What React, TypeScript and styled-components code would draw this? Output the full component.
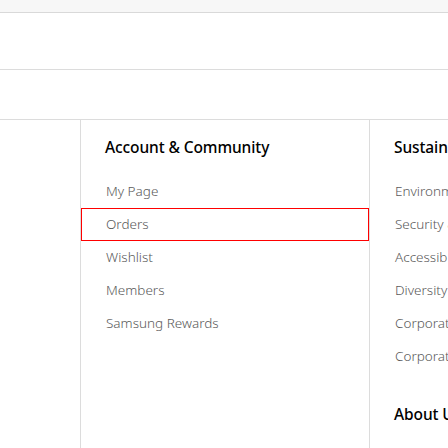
import React from "react";
import styled, { createGlobalStyle } from "styled-components";

const Global = createGlobalStyle`
  html, body { margin: 0; padding: 0; background: #fff; }
  body { font-family: "Noto Sans", "Open Sans", Arial, sans-serif; overflow: hidden; }
`;

const Page = styled.div`
  width: 448px;
  height: 448px;
  overflow: hidden;
  display: flex;
  flex-direction: column;
`;

const TopStrip = styled.div`
  height: 12px;
  background: #f7f7f7;
  border-bottom: 1px solid #d9d9d9;
  flex: none;
`;

const Band = styled.div<{ $h: number }>`
  height: ${(p) => p.$h}px;
  border-bottom: 1px solid #dcdcdc;
  flex: none;
`;

const Columns = styled.div`
  display: flex;
  flex: 1;
  min-height: 0;
`;

const Column = styled.div<{ $w: number }>`
  width: ${(p) => p.$w}px;
  flex: none;
  border-right: 1px solid #dcdcdc;
  display: flex;
  flex-direction: column;
`;

const Heading = styled.h3<{ $top: number }>`
  margin: ${(p) => p.$top}px 0 0;
  padding: 0 24px;
  font-size: 15.5px;
  line-height: 20px;
  font-weight: 500;
  color: #000;
  white-space: nowrap;
  overflow: hidden;
  letter-spacing: -0.1px;
`;

const List = styled.ul`
  list-style: none;
  margin: 18px 0 0;
  padding: 0;
`;

const Item = styled.li``;

const Link = styled.a<{ $focus?: boolean }>`
  display: block;
  height: 33px;
  line-height: 33px;
  padding: 0 25px;
  font-size: 13.5px;
  font-weight: 300;
  color: #5a5a5a;
  text-decoration: none;
  white-space: nowrap;
  overflow: hidden;
  outline: ${(p) => (p.$focus ? "1px solid #ff0000" : "none")};
  outline-offset: -1px;
`;

const account = ["My Page", "Orders", "Wishlist", "Members", "Samsung Rewards"];
const sustain = [
  "Environment",
  "Security & Privacy",
  "Accessibility",
  "Diversity · Equity · Inclusion",
  "Corporate Citizenship",
  "Corporate Sustainability",
];

export default function App() {
  return (
    <Page>
      <Global />
      <TopStrip />
      <Band $h={56} />
      <Band $h={49} />
      <Columns>
        <Column $w={80} />
        <Column $w={288}>
          <Heading $top={17}>Account &amp; Community</Heading>
          <List>
            {account.map((t) => (
              <Item key={t}>
                <Link href="#" $focus={t === "Orders"}>
                  {t}
                </Link>
              </Item>
            ))}
          </List>
        </Column>
        <Column $w={300}>
          <Heading $top={17}>Sustainability</Heading>
          <List>
            {sustain.map((t) => (
              <Item key={t}>
                <Link href="#">{t}</Link>
              </Item>
            ))}
          </List>
          <Heading $top={31}>About Us</Heading>
        </Column>
      </Columns>
    </Page>
  );
}
